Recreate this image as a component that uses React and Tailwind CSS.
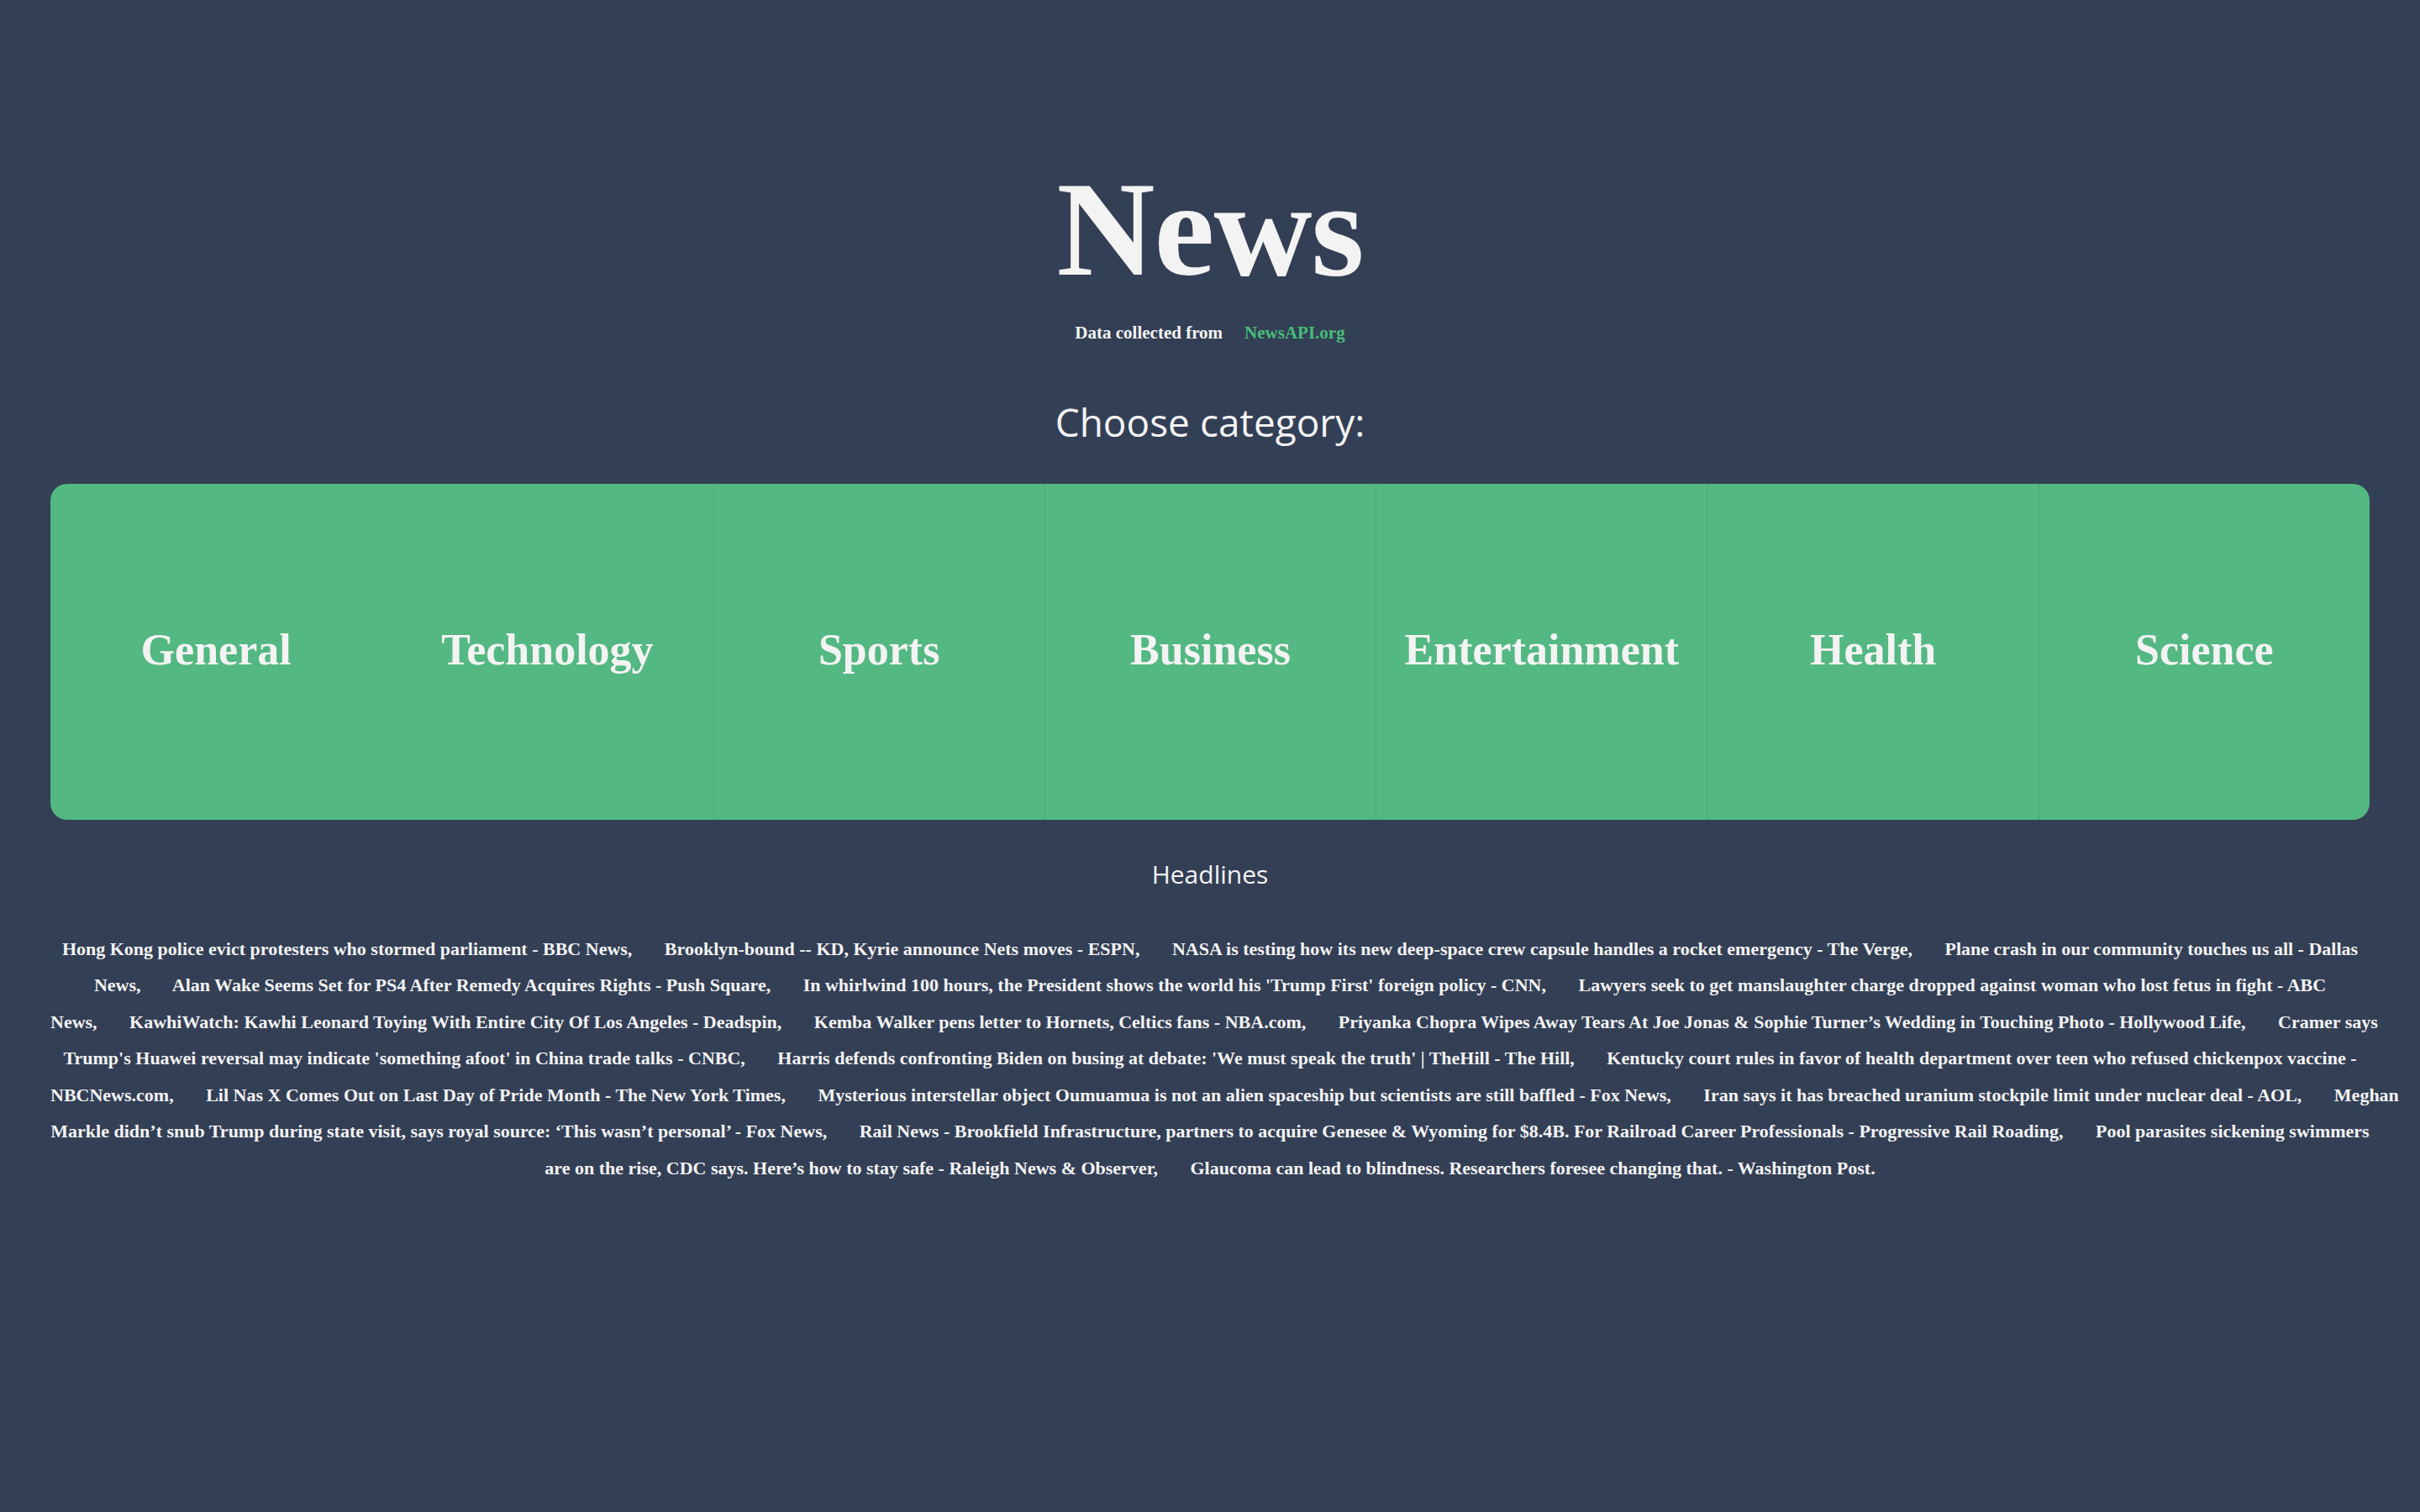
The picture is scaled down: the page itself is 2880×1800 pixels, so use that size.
import React from 'react';

const categories = ['General', 'Technology', 'Sports', 'Business', 'Entertainment', 'Health', 'Science'];

// '|' marks where the paragraph wraps
const headlines = [
  'Hong Kong police evict protesters who stormed parliament - BBC News',
  'Brooklyn-bound -- KD, Kyrie announce Nets moves - ESPN',
  'NASA is testing how its new deep-space crew capsule handles a rocket emergency - The Verge',
  'Plane crash in our community touches us all - Dallas|News',
  'Alan Wake Seems Set for PS4 After Remedy Acquires Rights - Push Square',
  "In whirlwind 100 hours, the President shows the world his 'Trump First' foreign policy - CNN",
  'Lawyers seek to get manslaughter charge dropped against woman who lost fetus in fight - ABC|News',
  'KawhiWatch: Kawhi Leonard Toying With Entire City Of Los Angeles - Deadspin',
  'Kemba Walker pens letter to Hornets, Celtics fans - NBA.com',
  'Priyanka Chopra Wipes Away Tears At Joe Jonas & Sophie Turner’s Wedding in Touching Photo - Hollywood Life',
  "Cramer says|Trump's Huawei reversal may indicate 'something afoot' in China trade talks - CNBC",
  "Harris defends confronting Biden on busing at debate: 'We must speak the truth' | TheHill - The Hill",
  'Kentucky court rules in favor of health department over teen who refused chickenpox vaccine -|NBCNews.com',
  'Lil Nas X Comes Out on Last Day of Pride Month - The New York Times',
  'Mysterious interstellar object Oumuamua is not an alien spaceship but scientists are still baffled - Fox News',
  'Iran says it has breached uranium stockpile limit under nuclear deal - AOL',
  'Meghan|Markle didn’t snub Trump during state visit, says royal source: ‘This wasn’t personal’ - Fox News',
  'Rail News - Brookfield Infrastructure, partners to acquire Genesee & Wyoming for $8.4B. For Railroad Career Professionals - Progressive Rail Roading',
  'Pool parasites sickening swimmers|are on the rise, CDC says. Here’s how to stay safe - Raleigh News & Observer',
  'Glaucoma can lead to blindness. Researchers foresee changing that. - Washington Post',
];

const serif = "font-['Liberation_Serif','DejaVu_Serif',serif]";
const sans = "font-['Open_Sans','Noto_Sans',sans-serif]";
const gap = '\u00a0'.repeat(6);

const lines = headlines
  .map((h, i) => (i === headlines.length - 1 ? `${h}.` : `${h},${gap} `))
  .join('')
  .replace(' | TheHill', ' \u2016 TheHill')
  .split('|')
  .map((l) => l.replace('\u2016', '|'));

export default function App() {
  return (
    <div className="min-h-screen bg-[#333f55] text-[#f3f3f3] flex flex-col items-center">
      <h1 className={`${serif} font-bold text-[162px] leading-none mt-[192px] tracking-[-1px]`}>News</h1>

      <p className={`${serif} font-bold text-[21px] mt-[27px] flex gap-[26px]`}>
        <span>Data collected from</span>
        <span className="text-[#48bb78]">NewsAPI.org</span>
      </p>

      <h2 className={`${sans} font-medium text-[46px] mt-[66px] leading-none`}>Choose category:</h2>

      <div className="w-full px-[60px] mt-[51px]">
        <div className="grid grid-cols-7 h-[400px] bg-[#54b882] rounded-[20px] overflow-hidden">
          {categories.map((c, i) => (
            <div
              key={c}
              className={`flex items-center justify-center pb-[4px] ${i > 1 ? 'border-l border-[#4ca577]' : ''}`}
            >
              <span className={`${serif} font-bold text-[52px]`}>{c}</span>
            </div>
          ))}
        </div>
      </div>

      <h3 className={`${sans} text-[30px] mt-[50px] leading-none`}>Headlines</h3>

      <p className={`${serif} font-bold text-[22px] leading-[43.5px] text-center whitespace-nowrap px-[60px] mt-[52px] w-full`}>
        {lines.map((l, i) => (
          <React.Fragment key={i}>
            {l}
            {i < lines.length - 1 && <br />}
          </React.Fragment>
        ))}
      </p>
    </div>
  );
}
